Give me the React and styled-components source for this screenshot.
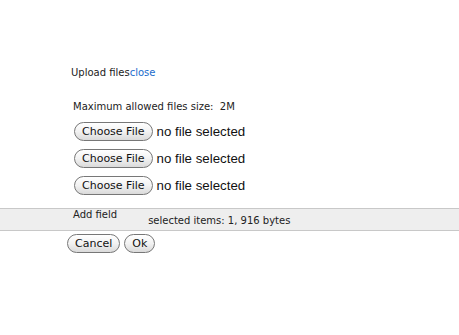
import React from 'react'
import styled, { createGlobalStyle } from 'styled-components'

const Global = createGlobalStyle`
    html, body {
        margin: 0;
        padding: 0;
        background: #fff;
    }
    body {
        font-family: "DejaVu Sans", Verdana, sans-serif;
        color: #222;
    }
`

function FileRow() {
    return (
        <Row>
            <Pill>Choose File</Pill>
            <NoFile>no file selected</NoFile>
        </Row>
    )
}

export default function App() {
    return (
        <Page>
            <Global />
            <Title>
                Upload files<CloseLink href="#">close</CloseLink>
            </Title>
            <Limit>Maximum allowed files size:&nbsp; 2M</Limit>
            <Files>
                <FileRow />
                <FileRow />
                <FileRow />
            </Files>
            <StatusBar>
                <AddField>Add field</AddField>
                <Selected>selected items: 1, 916 bytes</Selected>
            </StatusBar>
            <Actions>
                <Pill>Cancel</Pill>
                <Pill>Ok</Pill>
            </Actions>
        </Page>
    )
}

const Page = styled.div`
    width: 459px;
    height: 335px;
    padding-top: 66px;
    box-sizing: border-box;
`

const Title = styled.div`
    margin-left: 71px;
    font-size: 10px;
    line-height: 14px;
    color: #222;
`

const CloseLink = styled.a`
    color: #1a6ccc;
    text-decoration: none;
`

const Limit = styled.div`
    margin: 20px 0 0 73px;
    font-size: 10px;
    line-height: 14px;
`

const Files = styled.div`
    margin: 8px 0 0 74px;
    display: flex;
    flex-direction: column;
    gap: 8px;
`

const Row = styled.div`
    display: flex;
    align-items: center;
    height: 19px;
`

const Pill = styled.button`
    height: 19px;
    padding: 0 7px;
    border: 1px solid #777;
    border-radius: 9.5px;
    background: linear-gradient(#ffffff, #f2f2f2 50%, #dadada);
    font-family: "DejaVu Sans", Verdana, sans-serif;
    font-size: 11px;
    font-weight: 500;
    color: #111;
    line-height: 17px;
    cursor: pointer;
`

const NoFile = styled.span`
    margin-left: 4px;
    font-family: "Liberation Sans", Arial, sans-serif;
    font-size: 13.3px;
    color: #111;
`

const StatusBar = styled.div`
    margin-top: 13px;
    height: 21px;
    background: #eeeeee;
    border-top: 1px solid #c8c8c8;
    border-bottom: 1px solid #c8c8c8;
    display: flex;
    align-items: flex-start;
`

const AddField = styled.span`
    margin: 0 0 0 73px;
    font-size: 10px;
    line-height: 12px;
`

const Selected = styled.span`
    margin: 6px 0 0 31px;
    font-size: 10px;
    line-height: 12px;
`

const Actions = styled.div`
    margin: 3px 0 0 67px;
    display: flex;
    gap: 4px;
`
